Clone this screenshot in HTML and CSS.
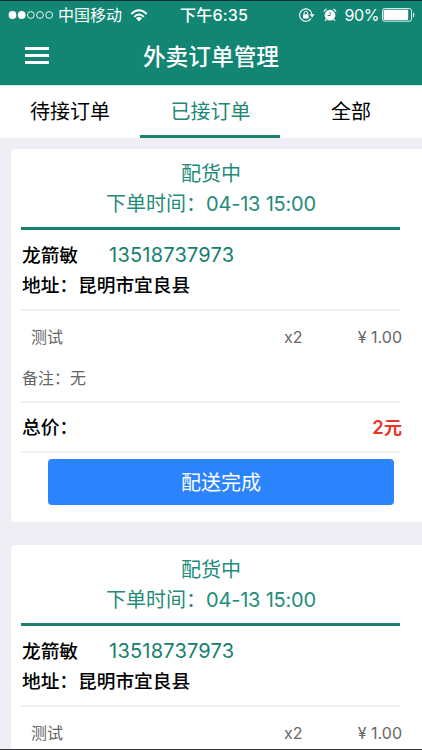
FILE: index.html
```html
<!DOCTYPE html>
<html lang="zh-CN">
<head>
<meta charset="utf-8">
<title>外卖订单管理</title>
<link rel="stylesheet" href="styles.css">
</head>
<body>
<div class="screen">
  <div class="status">
    <div class="status-left">
      <svg class="signal" width="46" height="10" viewBox="0 0 46 10"><g fill="#fff"><circle cx="4.5" cy="5" r="3.9"/><circle cx="13.7" cy="5" r="3.9"/></g><g fill="none" stroke="#fff" stroke-width=".9"><circle cx="22.8" cy="5" r="3.4"/><circle cx="32" cy="5" r="3.4"/><circle cx="41.2" cy="5" r="3.4"/></g></svg>
      <span class="carrier">中国移动</span>
      <svg class="wifi" width="18" height="13" viewBox="0 0 18 13"><g fill="none" stroke="#fff" stroke-width="1.9"><path d="M1.3 5Q9-2.3 16.7 5"/><path d="M4.1 7.9Q9 3.2 13.9 7.9"/></g><path d="M5.9 9.2Q9 6.8 12.1 9.2L9 12.5Z" fill="#fff"/></svg>
    </div>
    <div class="clock">下午6:35</div>
    <div class="status-right">
      <svg class="lock" width="16" height="14" viewBox="0 0 16 14"><path d="M12.1 10.4A6.2 6.2 0 1 1 13 6.5" fill="none" stroke="#fff" stroke-width="1.1"/><path d="M10.6 6.3h5L13.1 9.4Z" fill="#fff"/><rect x="4" y="6.2" width="5.6" height="4.3" rx=".5" fill="#fff"/><path d="M5.1 6.4V5a1.7 1.7 0 0 1 3.4 0v1.4" fill="none" stroke="#fff" stroke-width="1"/></svg>
      <svg class="alarm" width="14" height="14" viewBox="0 0 14 14"><circle cx="7" cy="7.2" r="5.4" fill="#fff"/><path d="M.9 3.6A8 8 0 0 1 3.5 1M10.5 1a8 8 0 0 1 2.6 2.6M3.3 11.2l-1.2 1.6M10.7 11.2l1.2 1.6" fill="none" stroke="#fff" stroke-width="1.1"/><path d="M7.2 4.2v3.3H4.7" fill="none" stroke="#128573" stroke-width=".9"/></svg>
      <span class="percent">90%</span>
      <svg class="battery" width="33" height="14" viewBox="0 0 33 14"><rect x=".5" y=".6" width="29" height="12.6" rx="2" fill="none" stroke="#fff" stroke-width=".9"/><rect x="1.6" y="1.8" width="24.6" height="10.2" rx="1" fill="#fff"/><path d="M31 4.6q1.4.4 1.4 2.3T31 9.2Z" fill="#fff"/></svg>
    </div>
  </div>
  <header class="header">
    <div class="menu"><i></i><i></i><i></i></div>
    <h1>外卖订单管理</h1>
  </header>
  <nav class="tabs">
    <div class="tab">待接订单</div>
    <div class="tab active">已接订单</div>
    <div class="tab">全部</div>
  </nav>
  <main class="orders">
    <section class="card">
      <div class="summary">
        <div>配货中</div>
        <div>下单时间：<span class="date">04-13 15:00</span></div>
      </div>
      <div class="customer">
        <div class="person"><span class="name">龙箭敏</span><span class="phone">13518737973</span></div>
        <div>地址：昆明市宜良县</div>
      </div>
      <div class="details">
        <div class="item"><span class="goods">测试</span><span class="count">x2</span><span class="price">¥ 1.00</span></div>
        <div class="note">备注：无</div>
      </div>
      <div class="total"><span>总价：</span><span class="amount">2元</span></div>
      <div class="button">配送完成</div>
    </section>
    <section class="card">
      <div class="summary">
        <div>配货中</div>
        <div>下单时间：<span class="date">04-13 15:00</span></div>
      </div>
      <div class="customer">
        <div class="person"><span class="name">龙箭敏</span><span class="phone">13518737973</span></div>
        <div>地址：昆明市宜良县</div>
      </div>
      <div class="details">
        <div class="item"><span class="goods">测试</span><span class="count">x2</span><span class="price">¥ 1.00</span></div>
      </div>
    </section>
  </main>
</div>
</body>
</html>
```
FILE: styles.css
```css
* { box-sizing: border-box; }
body { margin: 0; font-family: Inter, "Noto Sans CJK SC", sans-serif; color: #000; }
svg { display: block; flex: none; }
.screen { display: flex; flex-direction: column; width: 422px; height: 750px; overflow: hidden; background: #efeef4; border-top: 1px solid #0b2f2a; border-bottom: 1px solid #333; white-space: nowrap; }
.status { display: grid; grid-template-columns: 172px 68px 1fr; align-items: center; flex: none; height: 28px; padding: 0 7px 0 8px; background: #128573; color: #fff; font-size: 16px; line-height: 28px; }
.status-left, .status-right { display: flex; align-items: center; }
.status-right { justify-content: flex-end; }
.carrier { margin-left: 4px; }
.wifi { margin-left: 8px; }
.clock { font-weight: 500; letter-spacing: .2px; }
.alarm { margin-left: 8px; }
.percent { margin-left: 7px; font-size: 16px; letter-spacing: -.4px; }
.battery { margin-left: 3px; }
.header { display: grid; grid-template-columns: 25px 1fr 25px; align-items: center; flex: none; height: 56px; background: #128573; color: #fff; }
.menu { display: flex; flex-direction: column; gap: 4px; width: 24px; margin: -3px 0 0 25px; }
.menu i { height: 2.7px; background: #fff; }
h1 { margin: 0; font-size: 22.7px; font-weight: 500; line-height: 56px; text-align: center; }
.tabs { display: grid; grid-template-columns: 140px 140px 142px; flex: none; height: 53px; background: #fff; border-top: 1px solid #c9f3ea; }
.tab { height: 52px; font-size: 20px; line-height: 52px; text-align: center; }
.active { color: #218875; padding-left: 1px; border-bottom: 3px solid #18806e; }
.orders { display: flex; flex-direction: column; gap: 23px; flex: 1; min-height: 0; padding: 11px 0 0 11px; overflow: hidden; }
.card { flex: none; height: 373px; padding: 9px 22px 0 10px; background: #fff; border-radius: 4px 0 0 4px; }
.summary { height: 72px; padding: 1px 0 0 1px; font-size: 20px; line-height: 30px; color: #238b78; text-align: center; border-bottom: 3px solid #18806e; }
.date { letter-spacing: -.2px; }
.customer { height: 81px; padding: 11px 0 0 1px; font-size: 18.7px; line-height: 30px; font-weight: 500; border-bottom: 2px solid #f0f0f0; }
.person { display: flex; gap: 31px; height: 30px; }
.phone { font-size: 20px; line-height: 29px; font-weight: 400; color: #16806d; letter-spacing: .2px; }
.details { height: 92px; padding-top: 10px; font-size: 16px; color: #666; border-bottom: 2px solid #f0f0f0; }
.item { display: grid; grid-template-columns: 1fr 18px 100px; line-height: 32px; padding-left: 10px; margin-right: -2px; }
.price { text-align: right; }
.note { margin-top: 9px; padding-left: 1px; line-height: 32px; }
.total { display: flex; justify-content: space-between; height: 50px; margin-right: -2px; padding-left: 1px; font-size: 18.7px; font-weight: 500; line-height: 49px; background: linear-gradient(#f0f0f0, #f0f0f0) left bottom / 379px 2px no-repeat; }
.amount { color: #ea3429; font-weight: 600; font-size: 18.3px; }
.button { height: 46px; margin: 6px 6px 0 27px; border-radius: 4px; background: #2b83fe; color: #fff; font-size: 20px; line-height: 48px; text-align: center; }
```
